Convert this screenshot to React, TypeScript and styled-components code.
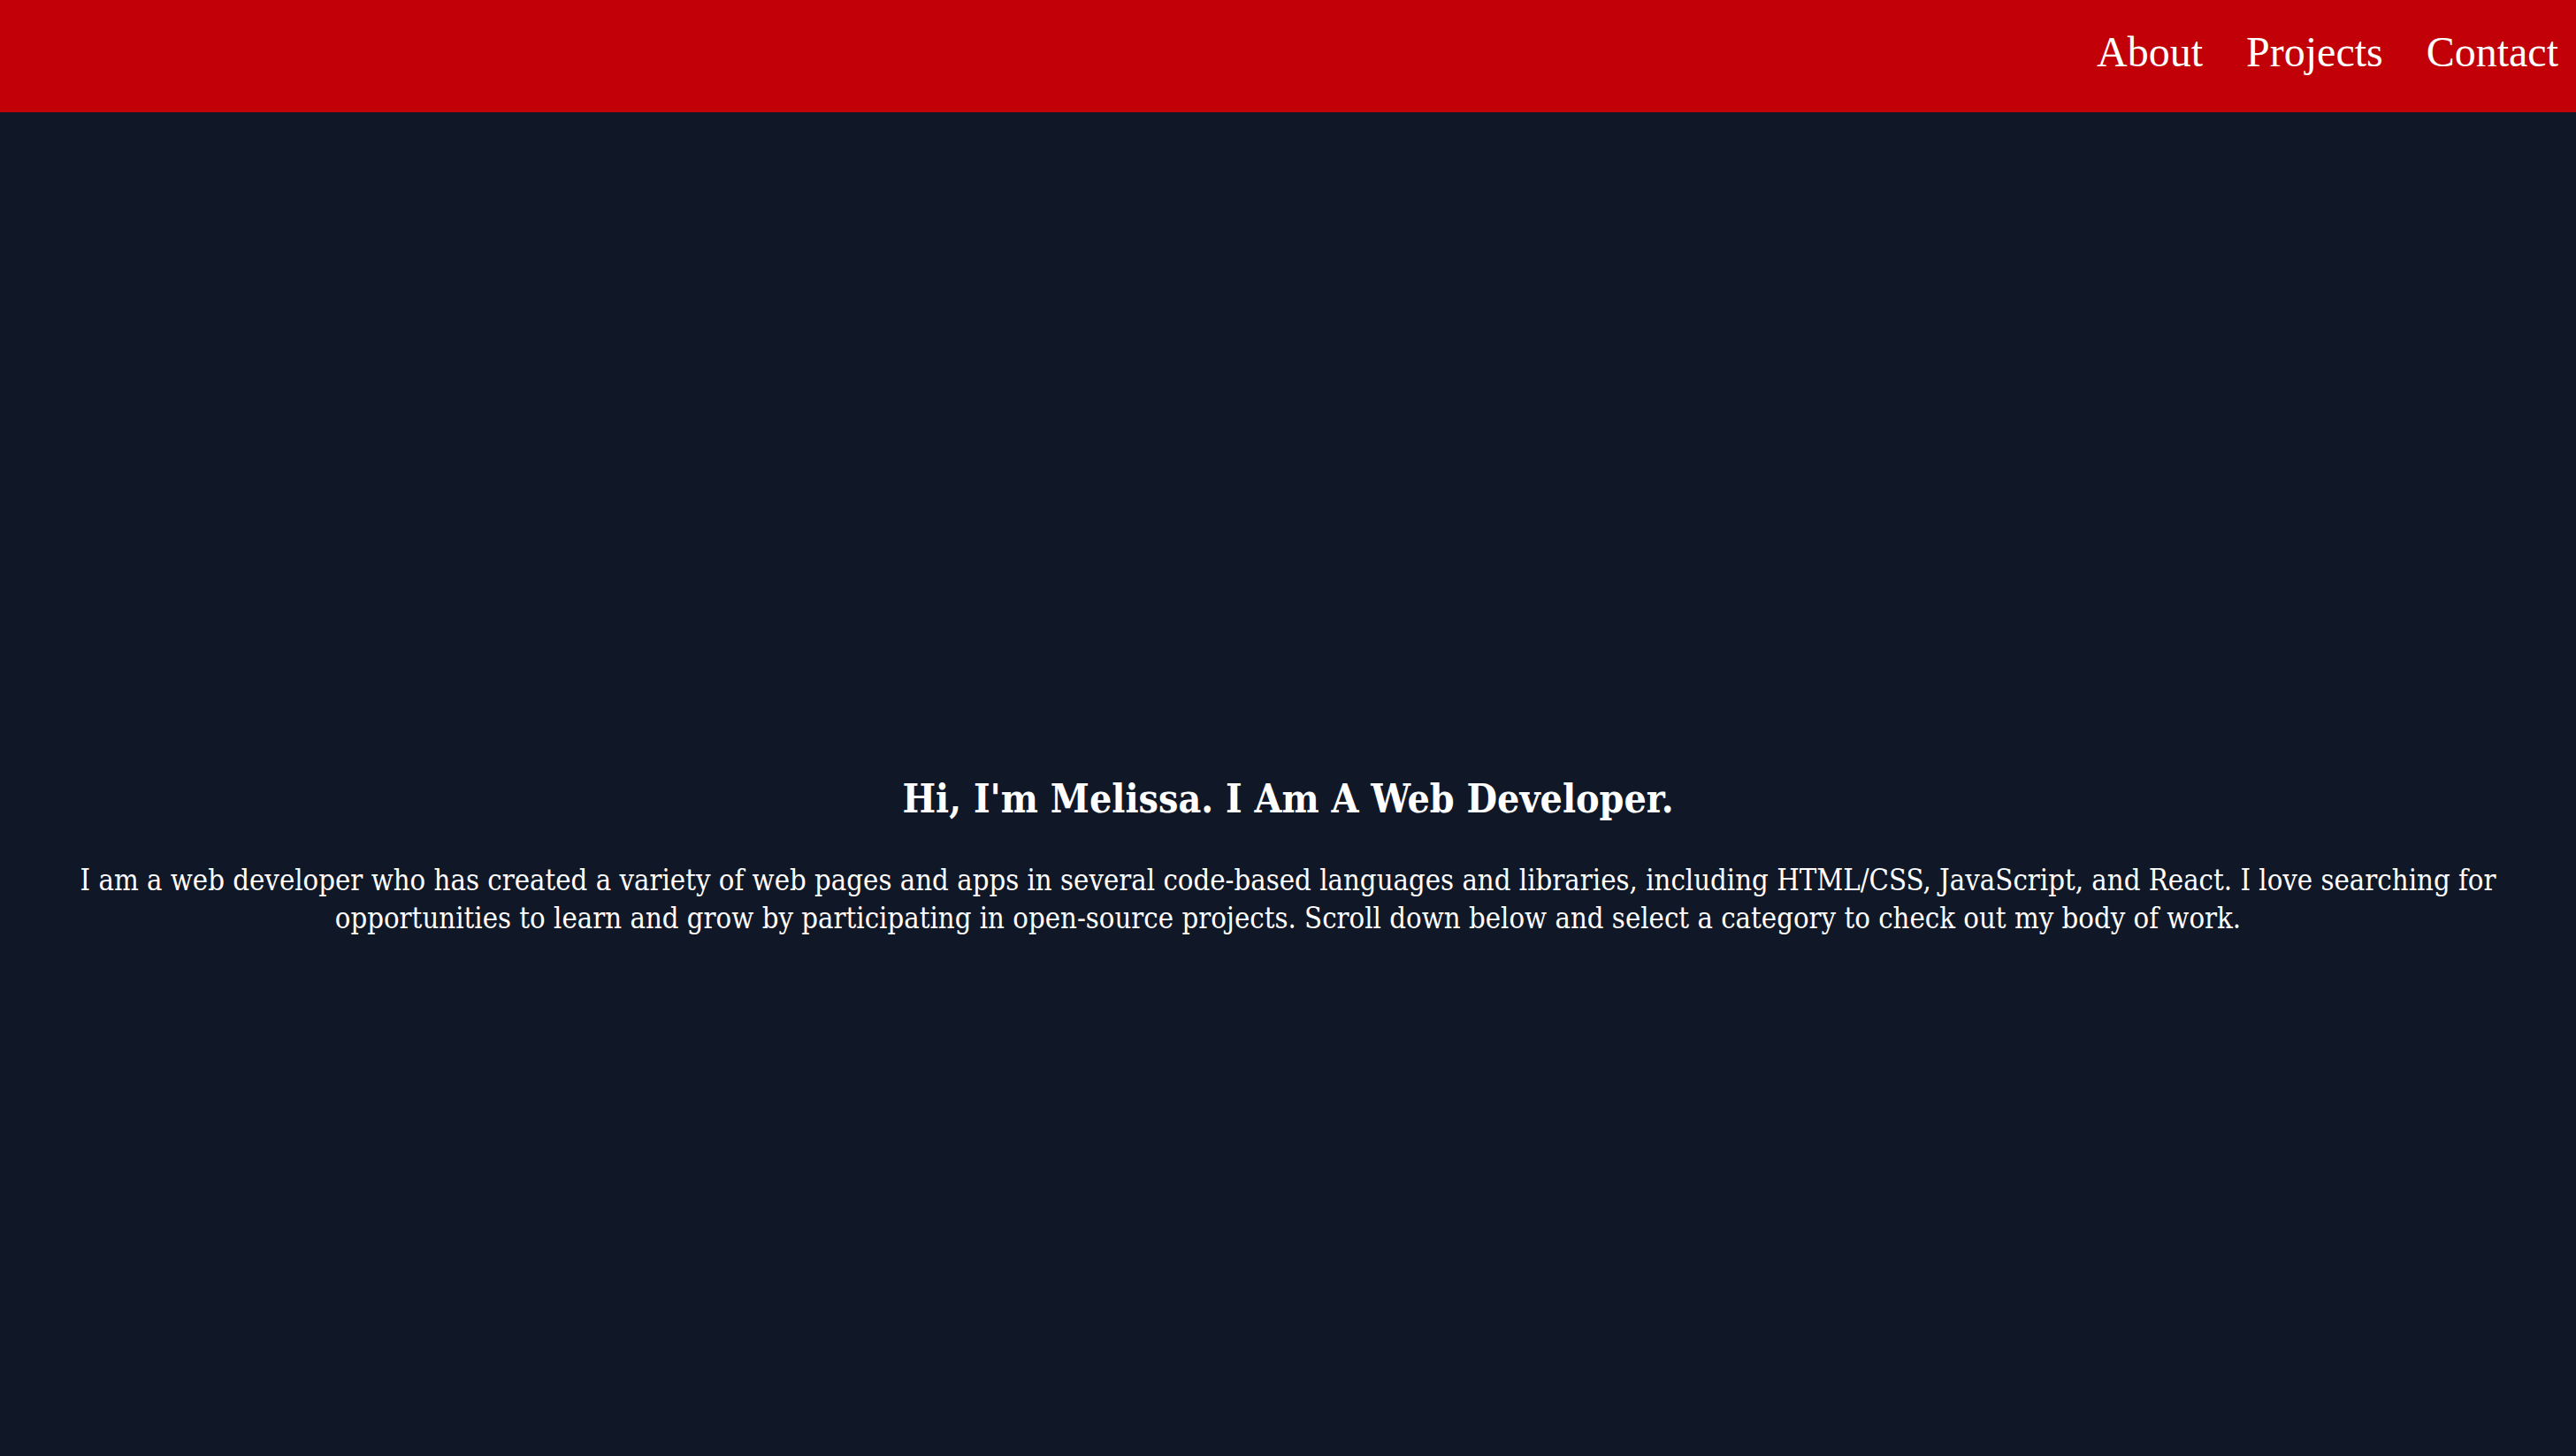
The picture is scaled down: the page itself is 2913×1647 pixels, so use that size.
import React from "react";
import styled, { createGlobalStyle } from "styled-components";

const Global = createGlobalStyle`
  html, body { margin: 0; padding: 0; background: #101828; }
  * { box-sizing: border-box; }
`;

const Page = styled.div`
  min-height: 100vh;
  background: #101828;
  color: #ffffff;
  display: flex;
  flex-direction: column;
`;

const Header = styled.header`
  height: 127px;
  background: #c10007;
  display: flex;
  justify-content: flex-end;
  align-items: center;
  padding: 0 20px 10px 0;
`;

const Nav = styled.nav`
  display: flex;
  gap: 49px;
`;

const NavLink = styled.a`
  font-family: "Liberation Serif", "Times New Roman", serif;
  font-size: 48px;
  color: #ffffff;
  text-decoration: none;
`;

const Hero = styled.section`
  height: 1647px;
  display: flex;
  flex-direction: column;
  align-items: center;
  justify-content: center;
  padding: 36px 80px 0;
  text-align: center;
`;

const Title = styled.h1`
  font-family: "DejaVu Serif", serif;
  font-stretch: condensed;
  font-weight: 700;
  font-size: 44.3px;
  margin: 0 0 46px;
`;

const Lead = styled.p`
  font-family: "DejaVu Serif", serif;
  font-stretch: condensed;
  font-size: 32.6px;
  line-height: 43px;
  margin: 0;
`;

export default function App() {
  return (
    <>
      <Global />
      <Page>
        <Header>
          <Nav>
            <NavLink href="#about">About</NavLink>
            <NavLink href="#projects">Projects</NavLink>
            <NavLink href="#contact">Contact</NavLink>
          </Nav>
        </Header>
        <Hero>
          <Title>Hi, I'm Melissa. I Am A Web Developer.</Title>
          <Lead>
            I am a web developer who has created a variety of web pages and apps in several code-based languages and
            libraries, including HTML/CSS, JavaScript, and React. I love searching for opportunities to learn and grow by
            participating in open-source projects. Scroll down below and select a category to check out my body of work.
          </Lead>
        </Hero>
      </Page>
    </>
  );
}
